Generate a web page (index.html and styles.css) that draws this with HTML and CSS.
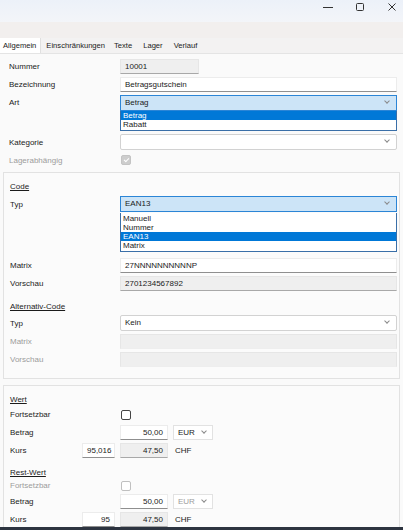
FILE: index.html
```html
<!DOCTYPE html>
<html lang="de">
<head>
    <meta charset="UTF-8">
    <title>Gutschein</title>
    <link rel="stylesheet" href="styles.css">
</head>
<body>
    <div class="titlebar">
        <span class="ctl">
            <svg width="12" height="12" viewBox="0 0 12 12"><path d="M1 6.5h10" stroke="#333" stroke-width="1"/></svg>
        </span>
        <span class="ctl">
            <svg width="12" height="12" viewBox="0 0 12 12"><rect x="2.5" y="2.5" width="7" height="7" rx="1" fill="none" stroke="#333" stroke-width="1"/></svg>
        </span>
        <span class="ctl">
            <svg width="12" height="12" viewBox="0 0 12 12"><path d="M2.5 2.5l7 7M9.5 2.5l-7 7" stroke="#333" stroke-width="1"/></svg>
        </span>
    </div>
    <div class="band"></div>

    <div class="tabs">
        <span class="tab active">Allgemein</span>
        <span class="tab">Einschränkungen</span>
        <span class="tab">Texte</span>
        <span class="tab">Lager</span>
        <span class="tab">Verlauf</span>
    </div>

    <div class="page">
        <div class="row">
            <label>Nummer</label>
            <div class="field ro short">10001</div>
        </div>
        <div class="row">
            <label>Bezeichnung</label>
            <div class="field">Betragsgutschein</div>
        </div>
        <div class="row">
            <label>Art</label>
            <div class="combo open">Betrag<span class="chev"></span></div>
        </div>
        <div class="list">
            <div class="item sel">Betrag</div>
            <div class="item">Rabatt</div>
        </div>
        <div class="row">
            <label>Kategorie</label>
            <div class="combo"><span class="chev"></span></div>
        </div>
        <div class="row">
            <label class="off">Lagerabhängig</label>
            <span class="check dis"></span>
        </div>

        <div class="group">
            <div class="row"><span class="head">Code</span></div>
            <div class="row">
                <label>Typ</label>
                <div class="combo open">EAN13<span class="chev"></span></div>
            </div>
            <div class="list">
                <div class="item">Manuell</div>
                <div class="item">Nummer</div>
                <div class="item sel">EAN13</div>
                <div class="item">Matrix</div>
            </div>
            <div class="row">
                <label>Matrix</label>
                <div class="field">27NNNNNNNNNNP</div>
            </div>
            <div class="row">
                <label>Vorschau</label>
                <div class="field ro">2701234567892</div>
            </div>
            <div class="row sub"><span class="head">Alternativ-Code</span></div>
            <div class="row">
                <label>Typ</label>
                <div class="combo">Kein<span class="chev"></span></div>
            </div>
            <div class="row">
                <label class="off">Matrix</label>
                <div class="field ro empty"></div>
            </div>
            <div class="row">
                <label class="off">Vorschau</label>
                <div class="field ro empty"></div>
            </div>
        </div>

        <div class="group money">
            <div class="mrow top"><span class="head">Wert</span></div>
            <div class="mrow chk">
                <label class="wide">Fortsetzbar</label>
                <span class="check"></span>
            </div>
            <div class="mrow">
                <label class="wide">Betrag</label>
                <div class="field num">50,00</div>
                <div class="combo small">EUR<span class="chev"></span></div>
            </div>
            <div class="mrow">
                <label>Kurs</label>
                <div class="field num">95,016</div>
                <div class="field ro num">47,50</div>
                <span class="cur">CHF</span>
            </div>
            <div class="mrow top rest"><span class="head">Rest-Wert</span></div>
            <div class="mrow chk second">
                <label class="wide off">Fortsetzbar</label>
                <span class="check light"></span>
            </div>
            <div class="mrow">
                <label class="wide">Betrag</label>
                <div class="field num">50,00</div>
                <div class="combo small off">EUR<span class="chev"></span></div>
            </div>
            <div class="mrow">
                <label>Kurs</label>
                <div class="field num">95</div>
                <div class="field ro num">47,50</div>
                <span class="cur">CHF</span>
            </div>
        </div>
    </div>
    <div class="taskbar"></div>
</body>
</html>
```

FILE: styles.css
```css
body
{
    margin: 0;
    width: 403px;
    height: 530px;
    overflow: hidden;
    font-family: "Liberation Sans", Arial, sans-serif;
    font-size: 8px;
    color: #1b1b1b;
    background-color: #fafafa;
    position: relative;
}
.titlebar
{
    height: 22px;
    display: flex;
    justify-content: flex-end;
    align-items: center;
    gap: 20px;
    padding-right: 5px;
    background: linear-gradient(to bottom, #ecf1f9, #f3f5f9);
}
.ctl
{
    width: 12px;
    height: 12px;
    display: block;
    margin-top: -8px;
}
.band
{
    height: 16px;
    background-color: #f2efee;
}
.tabs
{
    height: 15px;
    display: flex;
    align-items: stretch;
    background-color: #f3f2f2;
    border-bottom: 1px solid #e4e4e4;
    font-size: 7.6px;
}
.tab
{
    padding: 0 4px 0 5px;
    line-height: 15px;
}
.tab.active
{
    background-color: #fff;
    padding: 0 4px 0 3px;
    border-right: 1px solid #e0e0e0;
}
.tab:nth-child(3), .tab:nth-child(4)
{
    padding-right: 6px;
}
.page
{
    padding: 5px 0 0 0;
}
.row
{
    display: flex;
    align-items: center;
    height: 15px;
    margin-bottom: 3px;
    padding-left: 9px;
}
.row label
{
    width: 111px;
    flex-shrink: 0;
}
.off
{
    color: #9c9c9c;
}
.head
{
    text-decoration: underline;
}
.field
{
    box-sizing: border-box;
    height: 15px;
    line-height: 14px;
    padding: 0 4px;
    background-color: #fff;
    border: 1px solid #ececec;
    border-bottom: 1px solid #8f8f8f;
    width: 277px;
    white-space: nowrap;
}
.field.ro
{
    background-color: #efefef;
    border-color: #e6e6e6;
    border-bottom-color: #a8a8a8;
}
.field.empty
{
    border-bottom-color: #eeeeee;
}
.field.short
{
    width: 79px;
}
.combo
{
    box-sizing: border-box;
    position: relative;
    height: 16px;
    line-height: 14px;
    padding: 0 4px;
    width: 277px;
    background-color: #fff;
    border: 1px solid #d2d2d2;
    border-radius: 2px;
}
.combo.open
{
    background-color: #cce4f7;
    border-color: #2b85d6;
    border-radius: 0;
}
.chev
{
    position: absolute;
    right: 7px;
    top: 3px;
    width: 3px;
    height: 3px;
    border-right: 1px solid #8a8a8a;
    border-bottom: 1px solid #8a8a8a;
    transform: rotate(45deg);
}
.list
{
    box-sizing: border-box;
    margin: -3px 0 4px 120px;
    width: 277px;
    background-color: #fff;
    border: 1px solid #3a6fa8;
    border-top: none;
    padding: 1px 0 0 0;
}
.item
{
    height: 9.25px;
    line-height: 9.25px;
    padding-left: 2px;
}
.item.sel
{
    background-color: #0078d7;
    color: #fff;
}
.check
{
    box-sizing: border-box;
    width: 10px;
    height: 10px;
    margin-left: 1px;
    border: 1px solid #444;
    border-radius: 2px;
    background-color: #fff;
}
.check.dis
{
    border-color: #c4c4c4;
    background-color: #cdcdcd;
    position: relative;
}
.check.dis::after
{
    content: "";
    position: absolute;
    left: 2.5px;
    top: 1px;
    width: 2px;
    height: 4px;
    border-right: 1px solid #fff;
    border-bottom: 1px solid #fff;
    transform: rotate(45deg);
}
.check.light
{
    border-color: #c0c0c0;
}
.group
{
    margin: 4px 3px 0 3px;
    padding: 6px 0 8px 0;
    border: 1px solid #e2e2e2;
    background-color: #fbfbfb;
}
.group .row
{
    padding-left: 6px;
}
.group .row label
{
    width: 110px;
}
.group .list
{
    margin: -2px 0 6px 116px;
}
.row.sub
{
    margin-top: 8px;
    margin-bottom: 2px;
}
.money
{
    margin-top: 6px;
    padding-top: 6px;
    padding-left: 6px;
}
.mrow
{
    display: flex;
    align-items: center;
    height: 15px;
    margin-bottom: 3px;
}
.mrow.top
{
    margin-bottom: 2px;
}
.mrow.rest
{
    margin-top: 7px;
    margin-bottom: 0;
}
.mrow.chk
{
    height: 12px;
    margin-bottom: 4px;
}
.mrow.chk.second
{
    margin-bottom: 2px;
}
.mrow label
{
    width: 72px;
    flex-shrink: 0;
}
.mrow label.wide
{
    width: 110px;
}
.mrow .field
{
    width: 48px;
    margin-right: 5px;
}
.mrow .field.num
{
    text-align: right;
}
.mrow label + .field
{
    width: 33px;
}
.mrow label.wide + .field
{
    width: 48px;
}
.combo.small
{
    width: 40px;
    height: 15px;
    border-radius: 0;
    border-color: #e2e2e2;
}
.combo.small .chev
{
    right: 6px;
}
.cur
{
    margin-left: 2px;
}
.taskbar
{
    position: absolute;
    left: 0;
    right: 0;
    bottom: 0;
    height: 3px;
    background-color: #2d3440;
}
```
